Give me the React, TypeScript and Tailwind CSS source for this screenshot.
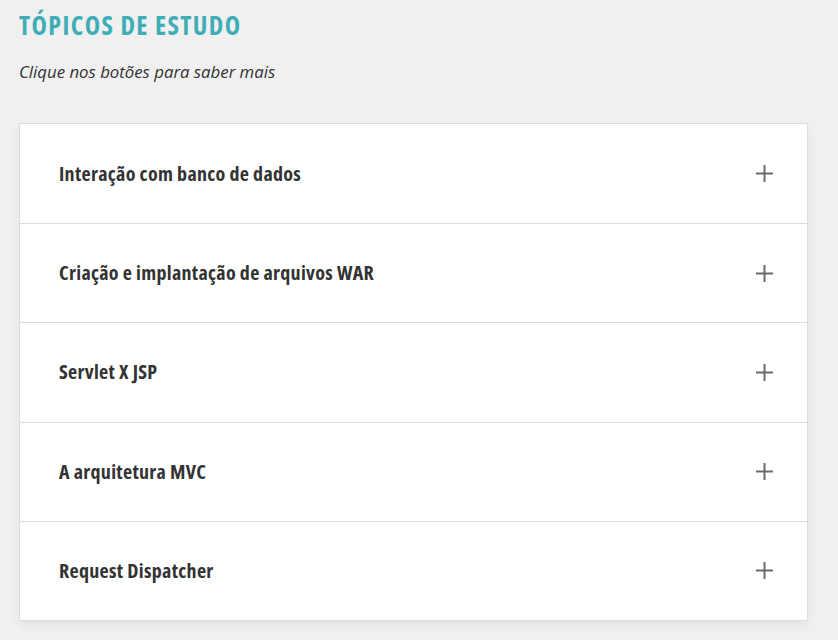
import React from "react";

const topics = [
  "Interação com banco de dados",
  "Criação e implantação de arquivos WAR",
  "Servlet X JSP",
  "A arquitetura MVC",
  "Request Dispatcher",
];

export default function App() {
  return (
    <div className="min-h-screen w-full bg-[#f0f0f0] px-[19px] pt-[10px] pb-8" style={{ fontFamily: '"Open Sans", sans-serif' }}>
      <h1 className="text-[26px] leading-[30px] font-bold font-stretch-condensed tracking-[1.4px] text-[#3fadb5]">TÓPICOS DE ESTUDO</h1>
      <p className="mt-[20px] text-[16.8px] leading-[24px] italic text-[#333]">Clique nos botões para saber mais</p>

      <div className="mt-[39px] w-[789px] border border-[#dcdcdc] bg-white shadow-[0_4px_10px_rgba(0,0,0,0.06)]">
        {topics.map((t, i) => (
          <div
            key={t}
            className={"flex h-[99.2px] items-center justify-between pl-[39px] pr-[34px] " + (i > 0 ? "border-t border-[#dcdcdc]" : "")}
          >
            <span className="text-[20px] font-bold font-stretch-condensed tracking-[0.3px] text-[#333]">{t}</span>
            <svg width="17" height="17" viewBox="0 0 17 17" className="text-[#6b6b6b]">
              <path d="M8.5 0v17M0 8.5h17" stroke="currentColor" strokeWidth="2" />
            </svg>
          </div>
        ))}
      </div>
    </div>
  );
}
